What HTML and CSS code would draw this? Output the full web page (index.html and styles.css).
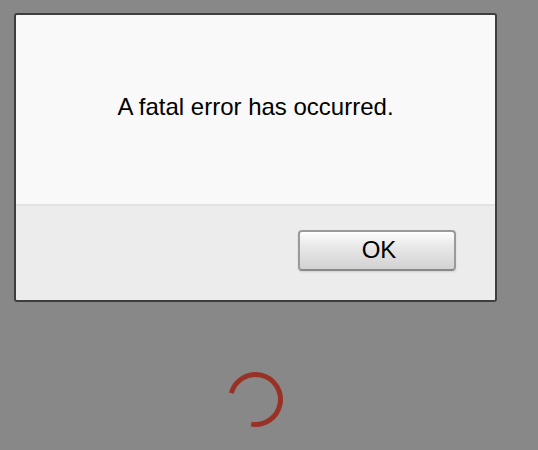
FILE: index.html
```html
<!DOCTYPE html>
<html lang="en">
<head>
  <meta charset="UTF-8">
  <title>Error</title>
  <link rel="stylesheet" href="styles.css">
</head>
<body>
  <div class="dialog">
    <div class="dialog-body">
      <p class="message">A fatal error has occurred.</p>
    </div>
    <div class="dialog-footer">
      <button class="btn">OK</button>
    </div>
  </div>

  <!-- Loading spinner behind the alert -->
  <svg class="spinner" width="60" height="60" viewBox="0 0 60 60">
    <path d="M5.35 23.03 A25 25 0 1 1 25.16 54.12" fill="none" stroke="#983227" stroke-width="5"/>
  </svg>
</body>
</html>
```

FILE: styles.css
```css
body {
  margin: 0;
  padding: 13px 0 0 14px;
  background-color: #888888;
  font-family: 'Liberation Sans', Arial, Helvetica, sans-serif;
  color: #000;
}

.dialog {
  box-sizing: border-box;
  width: 483px;
  height: 289px;
  border: 2px solid #3e3e3e;
  border-radius: 3px;
  display: flex;
  flex-direction: column;
  overflow: hidden;
}

.dialog-body {
  height: 189px;
  background-color: #f9f9f9;
  border-bottom: 2px solid #e2e2e2;
  display: flex;
  justify-content: center;
}

.message {
  margin: 78px 0 0;
  font-size: 24px;
  line-height: 28px;
}

.dialog-footer {
  flex-grow: 1;
  background-color: #ececec;
  display: flex;
  justify-content: flex-end;
  align-items: flex-start;
  padding: 24px 39px 0 0;
}

.btn {
  box-sizing: border-box;
  width: 158px;
  height: 41px;
  border: 2px solid #9a9a9a;
  border-bottom-color: #888;
  border-radius: 4px;
  background: linear-gradient(#fdfdfd, #e8e8e8 40%, #d2d2d2);
  box-shadow: inset 0 1px 0 #fff, 0 1px 2px rgba(0, 0, 0, 0.12);
  font-family: inherit;
  font-size: 24px;
  color: #000;
  padding: 0 0 1px 4px;
  cursor: pointer;
}

.spinner {
  display: block;
  margin: 68px 0 0 212px;
}
```
